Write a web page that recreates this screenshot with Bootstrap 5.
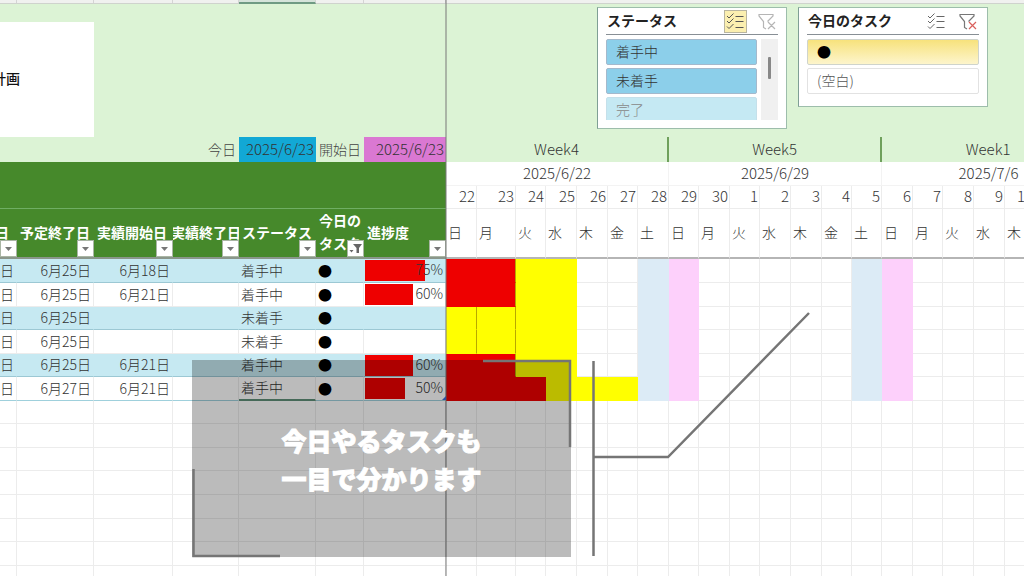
<!DOCTYPE html>
<html lang="ja">
<head>
<meta charset="utf-8">
<meta name="viewport" content="width=device-width, initial-scale=1">
<title>計画</title>
<link href="https://cdn.jsdelivr.net/npm/bootstrap@5.3.0/dist/css/bootstrap.min.css" rel="stylesheet">
<style>
  body { font-family: "Noto Sans CJK JP", sans-serif; font-size: 14px; font-weight: 300; color: #333; background: #fff; }
  .sheet { min-height: 100vh; }
  .col-strip { height: 4px; background: #f0f1ef; border-bottom: 1px solid #cfd3cd; }
  .col-strip i { border-right: 1px solid #d4d4d4; }
  .col-strip .picked { background: #d5e3da; border-bottom: 2px solid #6f9a83; height: 4px; }
  .top-band { height: 133px; background: #dcf3d5; padding-right: 36px; gap: 11px; }
  .plan-box { width: 94px; height: 115px; font-weight: 500; color: #111; }
  .plan-box span { margin-left: -8px; padding-bottom: 2px; }
  .freeze-line { left: 445px; width: 2px; background: rgba(120,120,120,.5); z-index: 2; }

  .slicer { width: 190px; margin-top: 3px; background: #fff; border: 1px solid #9dbdab; border-left-color: #7f9f95; padding: 0 8px; }
  .slicer.tall { height: 122px; }
  .slicer.low { height: 100px; }
  .slicer header { height: 27px; border-bottom: 1px solid #888f95; margin-bottom: 4px; }
  .slicer h2 { font-size: 14px; font-weight: 700; color: #222; line-height: 22px; padding: 0 0 3px 1px; }
  .tool { width: 23px; height: 23px; padding: 0; border: 1px solid transparent; background: none; line-height: 0; }
  .tool.on { background: #fbefb0; border-color: #b9b5a0; }
  .choices { height: 81px; overflow: hidden; gap: 3px; }
  .choice { height: 26px; flex: none; border: 1px solid #a4b9cc; border-radius: 2px; background: #8ccfea; text-align: left; padding: 0 9px 2px; line-height: 22px; color: #333; font-weight: 300; }
  .choice.faint { background: #c5e9f3; border-color: #c5e0ea; color: #888; }
  .choice.gold { background: linear-gradient(#f7e27c, #fdf5cc); border-color: #cfd4cc; color: #000; }
  .choice.plain { background: #fff; border-color: #e2e2e2; color: #555; }
  .track { width: 17px; height: 81px; background: #f0f0f0; padding-top: 18px; }
  .track span { width: 3px; height: 22px; background: #888; border-radius: 1px; }

  .grid-table { table-layout: fixed; border-collapse: separate; border-spacing: 0; width: 1096px; }
  .c17 { width: 17px } .c77 { width: 77px } .c79 { width: 79px } .c66 { width: 66px } .c48 { width: 48px } .c82 { width: 82px }
  .c30 { width: 30px } .c31 { width: 31px } .c39 { width: 39px }
  .grid-table th, .grid-table td { padding: 0 0 2px; overflow: hidden; white-space: nowrap; border: 0 solid #ececec; line-height: 20px; font-weight: 300; vertical-align: middle; }
  .weeks > * { height: 25px; background: #dcf3d5; }
  .weeks .wk { text-align: center; border-right: 2px solid #6fa05c !important; font-size: 15px; }
  .weeks .today { background: #12a8d5; }
  .weeks .start { background: #da78d2; }
  .grid-table .weeks .stamp { font-size: 15px; text-align: right; padding-right: 2px; }
  .grid-table .weeks .lbl { text-align: right; padding-right: 3px; color: #444; }
  .grid-table .green { background: #46892b; color: #fff; border-bottom: 1px solid #6fae63; }
  .sundays > * { height: 24px; font-size: 15px; text-align: center; }
  .grid-table .sundays th { border-width: 0 1px 1px 0; border-color: #f3f3f3; }
  .dates > * { height: 23px; font-size: 15px; text-align: right; }
  .grid-table .dates th { border-width: 0 1px 1px 0; padding-right: 1px; }
  .heads > * { height: 50px; }
  .grid-table .heads th { border-width: 0 1px 2px 0; border-bottom-color: #b5b5b5; padding-left: 2px; text-align: left; }
  .grid-table .heads .hd { position: relative; background: #46892b; color: #fff; font-weight: 700; padding-left: 3px; border-right: 0; border-bottom-color: #8a968a; }
  .grid-table .heads .hd.tight { padding-left: 0; }
  .grid-table .heads .hd.two { line-height: 23px; }
  .drop { position: absolute; right: 0; bottom: 0; width: 17px; height: 17px; padding: 0; background: #fff; border: 1px solid #a9b5a4; line-height: 0; }

  .rows td { height: 24px; text-align: right; }
  .grid-table .rows td { border-width: 0 1px 1px 0; padding-right: 2px; }
  .rows tr:nth-child(3) td, .rows tr:nth-child(5) td, .rows tr:nth-child(7) td,
  .rows tr:nth-child(9) td, .rows tr:nth-child(12) td { height: 23px; }
  .grid-table .rows .band td:nth-child(-n+7) { background: #c6e9f2; border-right-color: #c6e9f2; border-bottom-color: #9cc8d4; }
  .grid-table .rows .item td:nth-child(5) { text-align: left; padding-left: 2px; }
  .grid-table .rows .item td:nth-child(6) { text-align: left; padding-left: 2px; color: #000; }
  .grid-table .rows .item td:nth-child(7) { padding: 0 0 0 1px; }
  .grid-table .rows .closing td:nth-child(-n+7) { border-bottom-color: #9fd0dc; }
  .grid-table .rows .closing td:nth-child(5) { border-bottom: 2px solid #5f8f78; }
  .meter { display: block; height: 21px; line-height: 18px; padding-right: 2px; background: linear-gradient(#ee0000, #ee0000) no-repeat; }
  .grid-table .red { background: #ee0000; border-color: #ee0000 !important; }
  .grid-table .yel { background: #ffff00; border-color: #ffff00 !important; }
  .grid-table .seam { border-right-color: #b8a800 !important; }
  .grid-table .sat { background: #dcebf6; border-color: #dcebf6 !important; }
  .grid-table .sun { background: #fdd0fb; border-color: #fdd0fb !important; }

  .caption-box { left: 192px; top: 360px; width: 379px; height: 197px; background: rgba(0,0,0,.265); z-index: 3; }
  .caption-box p { font-size: 25px; line-height: 38px; font-weight: 900; color: #fff; -webkit-text-stroke: 1px #fff; }
  .overlay-lines { left: 0; top: 0; width: 820px; height: 560px; z-index: 4; pointer-events: none; }
</style>
<script src="https://cdn.jsdelivr.net/npm/bootstrap@5.3.0/dist/js/bootstrap.bundle.min.js"></script>
</head>
<body>
<main class="sheet position-relative overflow-hidden vh-100">
  <div class="col-strip d-flex"><i class="c17"></i><i class="c77"></i><i class="c79"></i><i class="c66"></i><i class="c77 picked"></i><i class="c48"></i><i class="c82"></i></div>

  <section class="top-band d-flex align-items-start">
    <div class="plan-box bg-white d-flex align-items-center overflow-hidden align-self-end me-auto text-nowrap"><span>計画</span></div>

    <div class="slicer tall">
      <header class="d-flex align-items-center">
        <h2 class="mb-0 me-auto">ステータス</h2>
        <button class="tool on me-2" type="button" aria-label="複数選択"><svg width="21" height="21" viewBox="0 0 21 21" fill="none" stroke="#555" stroke-width="1"><path d="M2 5l2 2 4.500-4.500M2 10l2 2 4.500-4.500M2 15.500l2 2 4.500-4.500M10.500 5.500h8M10.500 10.500h8M10.500 16.500h8"/></svg></button>
        <button class="tool" type="button" aria-label="フィルターのクリア"><svg width="21" height="21" viewBox="0 0 21 21" fill="none" stroke="#b5b5b5" stroke-width="1.200"><path d="M10 18l-2.500-1.500v-6L3 5V3.500h14V5l-5.500 5.500M12 11l7 7M19 11l-7 7"/></svg></button>
      </header>
      <div class="d-flex gap-1">
        <div class="choices d-flex flex-column flex-fill">
          <button class="choice" type="button">着手中</button>
          <button class="choice" type="button">未着手</button>
          <button class="choice faint" type="button">完了</button>
        </div>
        <div class="track d-flex justify-content-center"><span></span></div>
      </div>
    </div>

    <div class="slicer low">
      <header class="d-flex align-items-center">
        <h2 class="mb-0 me-auto">今日のタスク</h2>
        <button class="tool me-2" type="button" aria-label="複数選択"><svg width="21" height="21" viewBox="0 0 21 21" fill="none" stroke="#666" stroke-width="1"><path d="M2 5l2 2 4.500-4.500M2 10l2 2 4.500-4.500M2 15.500l2 2 4.500-4.500M10.500 5.500h8M10.500 10.500h8M10.500 16.500h8"/></svg></button>
        <button class="tool" type="button" aria-label="フィルターのクリア"><svg width="21" height="21" viewBox="0 0 21 21" fill="none" stroke="#777" stroke-width="1.200"><path d="M10 18l-2.500-1.500v-6L3 5V3.500h14V5l-5.500 5.500"/><path stroke="#d9605c" d="M12 11l7 7M19 11l-7 7"/></svg></button>
      </header>
      <div class="choices d-flex flex-column">
        <button class="choice gold" type="button">●</button>
        <button class="choice plain" type="button">(空白)</button>
      </div>
    </div>
  </section>

  <table class="grid-table">
    <colgroup>
      <col class="c17"><col class="c77"><col class="c79"><col class="c66"><col class="c77"><col class="c48"><col class="c82">
      <col class="c31"><col class="c39"><col class="c30"><col class="c31"><col class="c31"><col class="c30"><col class="c31">
      <col class="c30"><col class="c31"><col class="c30"><col class="c31"><col class="c31"><col class="c30"><col class="c30">
      <col class="c31"><col class="c30"><col class="c31"><col class="c31"><col class="c30"><col class="c31"><col class="c30">
    </colgroup>
    <thead>
      <tr class="weeks"><td colspan="3"></td><td class="lbl">今日</td><td class="stamp today">2025/6/23</td><td class="lbl">開始日</td><td class="stamp start">2025/6/23</td><th class="wk" colspan="7">Week4</th><th class="wk" colspan="7">Week5</th><th class="wk" colspan="7">Week1</th></tr>
      <tr class="sundays"><td class="green" colspan="7" rowspan="2"></td><th colspan="7">2025/6/22</th><th colspan="7">2025/6/29</th><th colspan="7">2025/7/6</th></tr>
      <tr class="dates"><th>22</th><th>23</th><th>24</th><th>25</th><th>26</th><th>27</th><th>28</th><th>29</th><th>30</th><th>1</th><th>2</th><th>3</th><th>4</th><th>5</th><th>6</th><th>7</th><th>8</th><th>9</th><th>10</th><th></th><th></th></tr>
      <tr class="heads">
        <th class="hd"><div class="d-flex justify-content-end pe-2">日</div><button class="drop" type="button" aria-label="絞り込み"><svg width="15" height="15"><path d="M4 6h7l-3.500 4z" fill="#777"/></svg></button></th>
        <th class="hd">予定終了日<button class="drop" type="button" aria-label="絞り込み"><svg width="15" height="15"><path d="M4 6h7l-3.500 4z" fill="#777"/></svg></button></th>
        <th class="hd">実績開始日<button class="drop" type="button" aria-label="絞り込み"><svg width="15" height="15"><path d="M4 6h7l-3.500 4z" fill="#777"/></svg></button></th>
        <th class="hd tight"><div class="d-flex justify-content-center">実績終了日</div><button class="drop" type="button" aria-label="絞り込み"><svg width="15" height="15"><path d="M4 6h7l-3.500 4z" fill="#777"/></svg></button></th>
        <th class="hd">ステータス<button class="drop" type="button" aria-label="絞り込み"><svg width="15" height="15"><path d="M4 6h7l-3.500 4z" fill="#777"/></svg></button></th>
        <th class="hd two">今日の<br>タスク<button class="drop" type="button" aria-label="絞り込み中"><svg width="15" height="15"><path d="M5 3h9l-3 4v5H8.500V7zM1.500 9h4l-2 2.500z" fill="#666"/></svg></button></th>
        <th class="hd">進捗度<button class="drop" type="button" aria-label="絞り込み"><svg width="15" height="15"><path d="M4 6h7l-3.500 4z" fill="#777"/></svg></button></th>
        <th>日</th><th>月</th><th>火</th><th>水</th><th>木</th><th>金</th><th>土</th><th>日</th><th>月</th><th>火</th><th>水</th><th>木</th><th>金</th><th>土</th><th>日</th><th>月</th><th>火</th><th>水</th><th>木</th><th></th><th></th>
      </tr>
    </thead>
    <tbody class="rows">
      <tr class="item band"><td>日</td><td>6月25日</td><td>6月18日</td><td></td><td>着手中</td><td>●</td><td><span class="meter" style="background-size:75% 100%">75%</span></td><td class="red"></td><td class="red seam"></td><td class="yel"></td><td class="yel"></td><td></td><td></td><td class="sat"></td><td class="sun"></td><td></td><td></td><td></td><td></td><td></td><td class="sat"></td><td class="sun"></td><td></td><td></td><td></td><td></td><td></td><td></td></tr>
      <tr class="item"><td>日</td><td>6月25日</td><td>6月21日</td><td></td><td>着手中</td><td>●</td><td><span class="meter" style="background-size:60% 100%">60%</span></td><td class="red"></td><td class="red seam"></td><td class="yel"></td><td class="yel"></td><td></td><td></td><td class="sat"></td><td class="sun"></td><td></td><td></td><td></td><td></td><td></td><td class="sat"></td><td class="sun"></td><td></td><td></td><td></td><td></td><td></td><td></td></tr>
      <tr class="item band"><td>日</td><td>6月25日</td><td></td><td></td><td>未着手</td><td>●</td><td></td><td class="yel seam"></td><td class="yel seam"></td><td class="yel"></td><td class="yel"></td><td></td><td></td><td class="sat"></td><td class="sun"></td><td></td><td></td><td></td><td></td><td></td><td class="sat"></td><td class="sun"></td><td></td><td></td><td></td><td></td><td></td><td></td></tr>
      <tr class="item"><td>日</td><td>6月25日</td><td></td><td></td><td>未着手</td><td>●</td><td></td><td class="yel seam"></td><td class="yel seam"></td><td class="yel"></td><td class="yel"></td><td></td><td></td><td class="sat"></td><td class="sun"></td><td></td><td></td><td></td><td></td><td></td><td class="sat"></td><td class="sun"></td><td></td><td></td><td></td><td></td><td></td><td></td></tr>
      <tr class="item band"><td>日</td><td>6月25日</td><td>6月21日</td><td></td><td>着手中</td><td>●</td><td><span class="meter" style="background-size:60% 100%">60%</span></td><td class="red"></td><td class="red seam"></td><td class="yel"></td><td class="yel"></td><td></td><td></td><td class="sat"></td><td class="sun"></td><td></td><td></td><td></td><td></td><td></td><td class="sat"></td><td class="sun"></td><td></td><td></td><td></td><td></td><td></td><td></td></tr>
      <tr class="item closing"><td>日</td><td>6月27日</td><td>6月21日</td><td></td><td>着手中</td><td>●</td><td><span class="meter" style="background-size:50% 100%">50%</span></td><td class="red"></td><td class="red"></td><td class="red"></td><td class="yel"></td><td class="yel"></td><td class="yel"></td><td class="sat"></td><td class="sun"></td><td></td><td></td><td></td><td></td><td></td><td class="sat"></td><td class="sun"></td><td></td><td></td><td></td><td></td><td></td><td></td></tr>
    </tbody>
  </table>

  <div class="freeze-line position-absolute top-0 bottom-0"></div>

  <div class="caption-box position-absolute d-flex align-items-center justify-content-center">
    <p class="mb-0">今日やるタスクも<br>一目で分かります</p>
  </div>
  <svg class="overlay-lines position-absolute" viewBox="0 0 820 560" fill="none" stroke="#757575" aria-hidden="true">
    <path stroke-width="2.500" d="M483 361h87v86M193.500 469v87H280"/>
    <path stroke-width="2.500" d="M593.500 361v195M593.500 457h74.500L809 313"/>
    <path fill="#2f4f9e" stroke="none" d="M446 396v4h-4z"/>
  </svg>
</main>
<script>
  // empty rows under the task list
  const body = document.querySelector('.rows');
  for (let r = 0; r < 8; r++) {
    const row = body.insertRow();
    for (let c = 0; c < 28; c++) row.insertCell();
  }
</script>
</body>
</html>
